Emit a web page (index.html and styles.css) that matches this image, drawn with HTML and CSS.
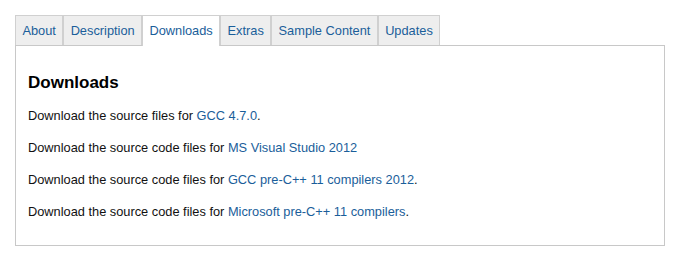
FILE: index.html
```html
<!DOCTYPE html>
<html lang="en">
<head>
    <meta charset="UTF-8">
    <meta name="viewport" content="width=device-width, initial-scale=1.0">
    <title>Downloads</title>
    <link rel="stylesheet" href="styles.css">
</head>
<body>
    <div class="tabs">
        <ul class="tab-list">
            <li class="tab"><a href="#">About</a></li>
            <li class="tab"><a href="#">Description</a></li>
            <li class="tab active"><a href="#">Downloads</a></li>
            <li class="tab"><a href="#">Extras</a></li>
            <li class="tab"><a href="#">Sample Content</a></li>
            <li class="tab"><a href="#">Updates</a></li>
        </ul>

        <div class="panel">
            <h2 class="panel-title">Downloads</h2>
            <p>Download the source files for <a href="#">GCC 4.7.0</a>.</p>
            <p>Download the source code files for <a href="#">MS Visual Studio 2012</a></p>
            <p>Download the source code files for <a href="#">GCC pre-C++ 11 compilers 2012</a>.</p>
            <p>Download the source code files for <a href="#">Microsoft pre-C++ 11 compilers</a>.</p>
        </div>
    </div>
</body>
</html>
```

FILE: styles.css
```css
body {
    margin: 0;
    padding: 15px 17px 20px 15px;
    font-family: 'Liberation Sans', Arial, sans-serif;
    font-size: 12.8px;
    color: #111;
    background: #fff;
}

a {
    color: #1a5e9a;
    text-decoration: none;
}

.tab-list {
    display: flex;
    list-style: none;
    margin: 0;
    padding: 0;
    position: relative;
    z-index: 1;
}

.tab {
    background: #eee;
    border: 1px solid #d0d0d0;
    border-bottom: none;
}

.tab a {
    display: block;
    padding: 7px 6.4px;
    line-height: 15px;
}

.tab.active {
    background: #fff;
    margin-bottom: -1px;
    padding-bottom: 1px;
}

.panel {
    border: 1px solid #c8c8c8;
    padding: 27px 13px 26px 12px;
}

.panel-title {
    font-size: 17px;
    font-weight: bold;
    margin: 0 0 15px;
    line-height: 20px;
    color: #000;
}

.panel p {
    margin: 0 0 17px;
    line-height: 15px;
}

.panel p:last-child {
    margin-bottom: 0;
}
```
